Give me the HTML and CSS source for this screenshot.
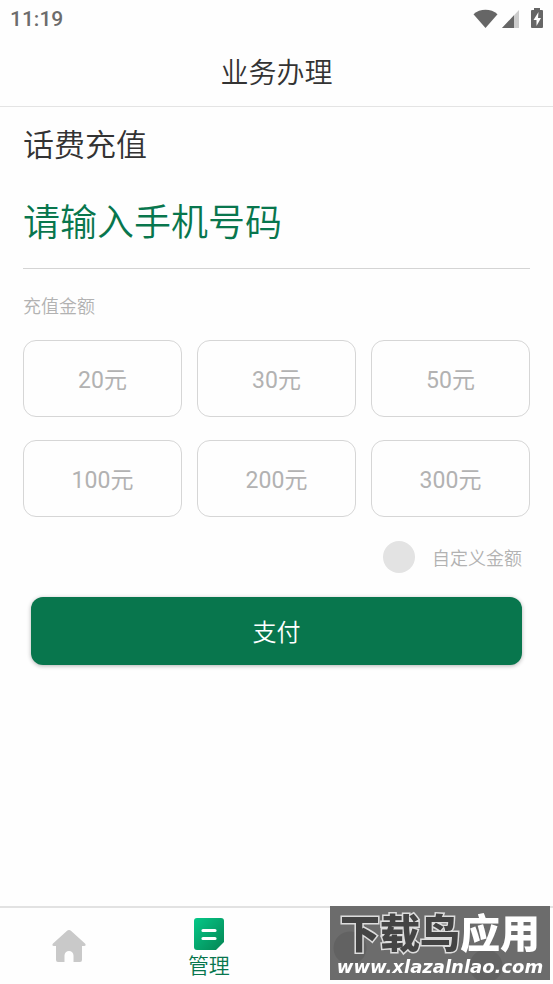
FILE: index.html
```html
<!DOCTYPE html>
<html lang="zh-CN">
<head>
<meta charset="utf-8">
<meta name="viewport" content="width=device-width, initial-scale=1">
<title>业务办理</title>
<link rel="stylesheet" href="styles.css">
</head>
<body>
<div class="status">
  <span>11:19</span>
  <svg class="status-icons" width="72" height="22" viewBox="0 0 72 22" aria-hidden="true">
    <path d="M2.500 6.200C9 .4 20 .4 26.500 6.200L14.500 20z" fill="#666"/>
    <path d="M48 2v18H31z" fill="#ccc"/>
    <path d="M43 7.300V20H31z" fill="#666"/>
    <path d="M61 2h2V0h6v2h2q1 0 1 1v16q0 1-1 1H61q-1 0-1-1V3q0-1 1-1z" fill="#666"/>
    <path d="M67.500 4L62.500 12h3v6l4.500-8h-3z" fill="#fff"/>
  </svg>
</div>
<header class="header"><h1>业务办理</h1></header>
<main class="main">
  <h2 class="heading">话费充值</h2>
  <input class="phone" type="tel" placeholder="请输入手机号码" aria-label="手机号码">
  <p class="label">充值金额</p>
  <div class="amounts">
    <button type="button">20元</button>
    <button type="button">30元</button>
    <button type="button">50元</button>
    <button type="button">100元</button>
    <button type="button">200元</button>
    <button type="button">300元</button>
  </div>
  <div class="custom">
    <input type="checkbox" id="custom">
    <label for="custom">自定义金额</label>
  </div>
  <button class="pay" type="button">支付</button>
</main>
<nav class="tabs">
  <a href="#home" aria-label="首页">
    <svg width="34" height="34" viewBox="0 0 34 34" aria-hidden="true">
      <path d="M14.800 1.900q2.200-1.900 4.400 0L33 14.500q1.600 2.500-1 2.500H30v14q0 2-2 2h-6.500v-6.500a4.500 4.500 0 0 0-9 0V33H6q-2 0-2-2V17H2q-2.600 0-1-2.500z" fill="#c9c9c9"/>
    </svg>
  </a>
  <a href="#manage" class="active">
    <svg width="30" height="32" viewBox="0 0 30 32" aria-hidden="true">
      <defs><linearGradient id="leaf" x1="0" y1="0" x2="1" y2="1"><stop offset="0" stop-color="#05c888"/><stop offset="1" stop-color="#058553"/></linearGradient></defs>
      <path d="M3 0h24q3 0 3 3v21l-8 8H3q-3 0-3-3V3q0-3 3-3z" fill="url(#leaf)"/>
      <path d="M9 12.500h12M9 20.500h12" stroke="#fff" stroke-width="3.200" stroke-linecap="round"/>
    </svg>
    <span>管理</span>
  </a>
</nav>
<aside class="mark">
  <div class="mark-name"><span>下载鸟</span><b>应用</b></div>
  <div class="mark-site">www.xlazalnlao.com</div>
</aside>
</body>
</html>
```
FILE: styles.css
```css
* { box-sizing: border-box; }

body {
  margin: 0;
  min-height: 100vh;
  display: flex;
  flex-direction: column;
  background: #fefefe;
  color: #333;
  font-family: Roboto, "Noto Sans CJK SC", sans-serif;
  font-weight: 350;
}

h1, h2, p { margin: 0; font-weight: inherit; }
button, input { font-family: inherit; font-weight: inherit; }

.status {
  display: flex;
  justify-content: space-between;
  align-items: center;
  height: 38px;
  padding: 0 10px;
  color: #6c6c6c;
  font-size: 21px;
  font-weight: 500;
}

.header {
  height: 69px;
  padding-top: 4px;
  border-bottom: 1px solid #e4e4e4;
  text-align: center;
}
.header h1 { font-size: 28px; line-height: 64px; }

.main {
  flex: 1;
  display: flex;
  flex-direction: column;
  padding: 16px 23px 24px;
}
.heading { font-size: 31px; line-height: 46px; }

.phone {
  width: 100%;
  height: 92px;
  margin-top: 8px;
  padding: 2px 0 0;
  border: 0;
  border-bottom: 1px solid #d4d4d4;
  border-radius: 0;
  background: none;
  color: #08764d;
  font-size: 37px;
  outline: none;
}
.phone::placeholder { color: #08764d; opacity: 1; }

.label {
  margin-top: 26px;
  color: #b2b2b2;
  font-size: 18px;
  line-height: 24px;
}

.amounts {
  display: grid;
  grid-template-columns: repeat(3, 1fr);
  gap: 23px 15px;
  margin-top: 21px;
}
.amounts button {
  height: 77px;
  padding: 0 0 2px;
  border: 1px solid #d6d6d6;
  border-radius: 13px;
  background: none;
  color: #b2b2b2;
  font-size: 23px;
  font-weight: 400;
}

.custom {
  display: flex;
  justify-content: flex-end;
  align-items: center;
  gap: 17px;
  margin-top: 24px;
  padding-right: 8px;
  color: #b2b2b2;
  font-size: 18px;
  line-height: 28px;
}
.custom label { padding-top: 4px; }
.custom input {
  appearance: none;
  width: 32px;
  height: 32px;
  margin: 0;
  border-radius: 50%;
  background: #e3e3e3;
}
.custom input:checked { background: #08764d; }

.pay {
  height: 68px;
  margin: 24px 8px 0;
  padding: 0 0 2px;
  border: 0;
  border-radius: 12px;
  background: #08764d;
  box-shadow: 0 1px 4px rgba(0, 0, 0, 0.3);
  color: #fff;
  font-size: 24px;
}

.tabs {
  display: grid;
  grid-template-columns: repeat(4, 1fr);
  height: 78px;
  border-top: 2px solid #e2e2e2;
}
.tabs a {
  display: flex;
  flex-direction: column;
  align-items: center;
  justify-content: center;
  color: #08764d;
  font-size: 21px;
  line-height: 32px;
  text-decoration: none;
}
.tabs .active { padding: 8px 0 0 3px; }

.mark {
  position: fixed;
  right: 3px;
  bottom: 4px;
  width: 220px;
  height: 74px;
  background:
    radial-gradient(circle at 20px 42px, #626262 16px, transparent 17px),
    radial-gradient(circle at 156px 60px, #626262 16px, transparent 17px),
    #6c6c6c;
  color: #fff;
  text-align: center;
  white-space: nowrap;
}
.mark-name {
  font-family: "Noto Sans CJK SC", sans-serif;
  font-size: 40px;
  font-weight: 900;
  line-height: 50px;
}
.mark-name span {
  color: #444;
  -webkit-text-stroke: 3px #ddd;
  paint-order: stroke fill;
}
.mark-site {
  font-family: "DejaVu Sans", sans-serif;
  font-size: 18px;
  font-weight: 700;
  font-style: italic;
  line-height: 22px;
}
```
